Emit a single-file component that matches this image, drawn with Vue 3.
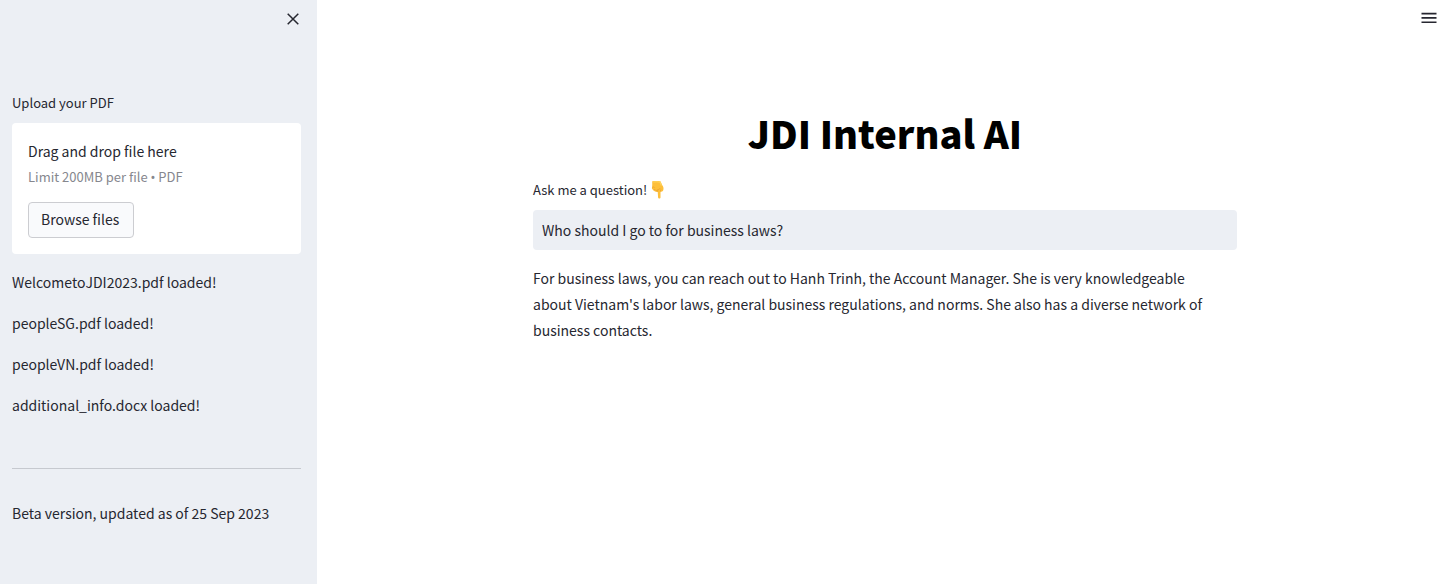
<script setup>
import { ref } from 'vue'

const question = ref('Who should I go to for business laws?')
const answer =
  "For business laws, you can reach out to Hanh Trinh, the Account Manager. She is very knowledgeable about Vietnam's labor laws, general business regulations, and norms. She also has a diverse network of business contacts."
const loaded = ['WelcometoJDI2023.pdf', 'peopleSG.pdf', 'peopleVN.pdf', 'additional_info.docx']
</script>

<template>
  <div class="app">
    <aside class="sidebar">
      <div class="sidebar-top">
        <button class="icon-button" type="button" aria-label="Close sidebar">
          <svg width="20" height="20" viewBox="0 0 20 20" fill="none" stroke="currentColor" stroke-width="1.5">
            <path d="M4.700 4.700 15.300 15.300M15.300 4.700 4.700 15.300" />
          </svg>
        </button>
      </div>
      <div class="sidebar-content">
        <h2 id="upload-label" class="label">Upload your PDF</h2>
        <section class="dropzone" aria-labelledby="upload-label">
          <div class="drop-title">Drag and drop file here</div>
          <div class="drop-hint">Limit 200MB per file <span class="bullet">•</span> PDF</div>
          <button class="browse" type="button">Browse files</button>
        </section>
        <ul class="files">
          <li v-for="name in loaded" :key="name">{{ name }} loaded!</li>
        </ul>
        <hr />
        <p class="version">Beta version, updated as of 25 Sep 2023</p>
      </div>
    </aside>

    <main class="main">
      <header class="toolbar">
        <button class="icon-button" type="button" aria-label="Main menu">
          <svg width="20" height="20" viewBox="0 0 20 20" fill="currentColor">
            <path d="M2.500 4.800h15v1.600h-15zM2.500 9.100h15v1.600h-15zM2.500 13.400h15v1.600h-15z" />
          </svg>
        </button>
      </header>
      <div class="content">
        <h1>JDI Internal AI</h1>
        <label class="label question-label" for="question">
          Ask me a question!
          <svg class="hand" width="14" height="18" viewBox="0 0 14 18" aria-hidden="true">
            <path
              d="M1.200.3C3.500 0 8 0 9.600.4c.6.900.8 2 1.300 3 .7 1.300 1.600 2.300 1.600 3.800 0 1.700-.4 3.100-1.700 3.300-.5.300-1 .2-1.300 0v5.900c0 1.500-2.300 1.500-2.400 0l-.4-5.700c-1 .4-1.900.2-2.300-.5-1.300.2-2-.4-2-1.400C1.100 8.300.7 7.400 1 6.400c.4-1.800.2-4 .2-6.100Z"
              fill="#fdbf3b"
            />
            <path d="M2.200 1C4.500.7 7.500.7 9.200 1.100c.3 1.400.7 2.500 1.200 3.400" fill="none" stroke="#ffd560" stroke-width="1.200" />
            <path
              d="M1.300 6.400c1-.7 2-.4 2.500.4M2.400 8.900c.8-.8 1.700-.6 2.100.1M4.400 10.300c.3-.9 1.300-1.200 2-.5M6.700 10.700V8.500c1.300.1 2.100-.4 2.500-1.400M9.500 10.500c-.2-.9 0-1.500.4-2"
              fill="none"
              stroke="#e89c2c"
              stroke-width=".7"
            />
          </svg>
        </label>
        <input id="question" v-model="question" class="question" type="text" />
        <p class="answer">{{ answer }}</p>
      </div>
    </main>
  </div>
</template>

<style>
body {
  margin: 0;
  background: #fff;
}
</style>

<style scoped>
* {
  box-sizing: border-box;
}

.app {
  display: flex;
  min-height: 100vh;
  color: #262730;
  font-family: "Noto Sans CJK SC", "Noto Sans", sans-serif;
  font-size: 14px;
  line-height: 26px;
}

.sidebar {
  flex: 0 0 317px;
  background: #eceff4;
}

.sidebar-top {
  display: flex;
  justify-content: flex-end;
  padding: 9px 14px 0 0;
}

.icon-button {
  display: block;
  padding: 0;
  border: 0;
  background: none;
  color: #262730;
  cursor: pointer;
}

.icon-button svg {
  display: block;
}

.sidebar-content {
  padding: 64px 16px 40px 12px;
}

.label {
  display: block;
  margin: 0;
  font-size: 13px;
  font-weight: 400;
  line-height: 20px;
}

.dropzone {
  margin-top: 10px;
  padding: 15px 16px 16px;
  border-radius: 4px;
  background: #fff;
}

.drop-hint {
  margin-top: 1px;
  color: #86878e;
  font-size: 13px;
  line-height: 24px;
}

.bullet {
  font-family: "Noto Sans", sans-serif;
}

.browse {
  display: block;
  height: 36px;
  margin-top: 13px;
  padding: 0 14px 2px 12px;
  border: 1px solid #cccdd1;
  border-radius: 4px;
  background: #f9fafc;
  color: inherit;
  font: inherit;
  cursor: pointer;
}

.files {
  display: grid;
  gap: 15px;
  margin: 15px 0 0;
  padding: 0;
  list-style: none;
}

hr {
  margin: 50px 0 31px;
  border: 0;
  border-top: 1px solid #c6c9cf;
}

.version {
  margin: 0;
}

.main {
  flex: 1;
  min-width: 0;
}

.toolbar {
  display: flex;
  justify-content: flex-end;
  padding: 8px 11px 0 0;
}

.content {
  max-width: 739px;
  margin: 0 auto;
  padding: 79px 16px 40px 19px;
}

h1 {
  margin: 0;
  color: #000;
  font-size: 38px;
  font-weight: 900;
  line-height: 52px;
  text-align: center;
}

.question-label {
  display: flex;
  gap: 4px;
  align-items: center;
  margin-top: 21px;
}

.question {
  display: block;
  width: 100%;
  height: 40px;
  margin-top: 10px;
  padding: 0 9px;
  border: 0;
  border-radius: 4px;
  outline: 0;
  background: #eceff4;
  color: inherit;
  font: inherit;
}

.answer {
  margin: 15px 0 0;
  padding-right: 16px;
}
</style>
